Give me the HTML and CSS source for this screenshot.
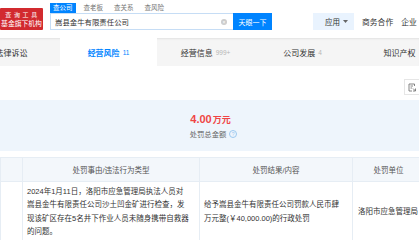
FILE: index.html
```html
<!DOCTYPE html>
<html lang="zh-CN">
<head>
    <meta charset="UTF-8">
    <meta name="viewport" content="width=device-width, initial-scale=1.0">
    <title>嵩县金牛有限责任公司 - 经营风险</title>
    <link rel="stylesheet" href="styles.css">
</head>
<body>
    <header class="topbar">
        <div class="logo">
            <span class="logo-top">查 询 工 具</span>
            <span class="logo-bottom">基金旗下机构</span>
        </div>

        <div class="search">
            <div class="search-tabs">
                <span class="stab active">查公司</span>
                <span class="stab">查老板</span>
                <span class="stab">查关系</span>
                <span class="stab">查风险</span>
            </div>
            <div class="search-row">
                <div class="search-input">
                    <span class="query">嵩县金牛有限责任公司</span>
                    <span class="clear">×</span>
                </div>
                <button class="search-btn">天眼一下</button>
            </div>
        </div>

        <nav class="toplinks">
            <span class="app">应用
                <svg width="5" height="3" viewBox="0 0 5 3"><path d="M0 0h5L2.5 3z" fill="#666"/></svg>
            </span>
            <span class="link">商务合作</span>
            <span class="link">企业</span>
        </nav>
    </header>

    <div class="tabs">
        <div class="tab">法律诉讼</div>
        <div class="tab active">经营风险<span class="count">11</span></div>
        <div class="tab">经营信息<span class="count">999+</span></div>
        <div class="tab">公司发展<span class="count">4</span></div>
        <div class="tab">知识产权</div>
    </div>

    <div class="toolbar">
        <span class="tool-btn">
            <svg width="9" height="9" viewBox="0 0 9 9" fill="none" stroke="#777" stroke-width="0.9">
                <path d="M6.5 3V1H1v7h3"/>
                <path d="M2.5 3h2.5M2.5 5h1.5"/>
                <path d="M5 5.5l2.5 2.5M7.5 5.5v2.5H5"/>
            </svg>
        </span>
    </div>

    <section class="summary">
        <div class="amount">4.00<span class="amount-unit">万元</span></div>
        <div class="amount-label">处罚总金额
            <span class="help">?</span>
        </div>
    </section>

    <table class="penalty">
        <colgroup>
            <col class="c-num">
            <col class="c-reason">
            <col class="c-result">
            <col class="c-dept">
        </colgroup>
        <thead>
            <tr>
                <th></th>
                <th>处罚事由/违法行为类型</th>
                <th>处罚结果/内容</th>
                <th>处罚单位</th>
            </tr>
        </thead>
        <tbody>
            <tr>
                <td></td>
                <td class="reason">2024年1月11日，洛阳市应急管理局执法人员对嵩县金牛有限责任公司沙土凹金矿进行检查，发现该矿区存在5名井下作业人员未随身携带自救器的问题。</td>
                <td class="result">给予嵩县金牛有限责任公司罚款人民币肆万元整(￥40,000.00)的行政处罚</td>
                <td class="dept">洛阳市应急管理局</td>
            </tr>
        </tbody>
    </table>
</body>
</html>
```

FILE: styles.css
```css
body {
    margin: 0;
    width: 419px;
    height: 240px;
    overflow: hidden;
    font-family: "Liberation Sans", "Noto Sans CJK SC", sans-serif;
    color: #333;
    background: #fff;
}

/* top bar */
.topbar {
    display: flex;
    align-items: flex-start;
    height: 38px;
    white-space: nowrap;
}

.logo {
    display: flex;
    flex-direction: column;
    align-items: center;
    width: 43px;
    height: 22px;
    margin-top: 8px;
    background: #d22a2f;
    color: #fff;
    border-radius: 1px;
}

.logo-top {
    font-size: 6px;
    line-height: 8px;
    margin-top: 3px;
    letter-spacing: 0.5px;
}

.logo-bottom {
    font-size: 6.8px;
    line-height: 9px;
}

.search {
    margin-left: 7px;
    margin-top: 3px;
}

.search-tabs {
    display: flex;
    height: 10px;
}

.stab {
    font-size: 6.5px;
    line-height: 10px;
    color: #777;
    margin-right: 11px;
}

.stab.active {
    background: #0084ff;
    color: #fff;
    padding: 0 3px;
    margin-right: 8px;
}

.search-row {
    display: flex;
    height: 17px;
}

.search-input {
    display: flex;
    align-items: center;
    justify-content: space-between;
    width: 174px;
    border: 1px solid #c6ddf5;
    border-right: none;
    padding: 0 4px;
}

.query {
    font-size: 7.4px;
}

.clear {
    width: 6px;
    height: 6px;
    border-radius: 50%;
    background: #ccc;
    color: #fff;
    font-size: 5px;
    line-height: 6px;
    text-align: center;
    margin-right: 2px;
}

.search-btn {
    width: 39px;
    border: none;
    padding: 0;
    background: #0084ff;
    color: #fff;
    font-family: inherit;
    font-size: 7px;
}

.toplinks {
    display: flex;
    align-items: center;
    margin-top: 13px;
    margin-left: 41px;
    height: 17px;
}

.app {
    display: flex;
    align-items: center;
    gap: 3px;
    height: 17px;
    padding: 0 6px 0 12px;
    background: #e9f3fe;
    font-size: 7.5px;
}

.link {
    font-size: 7.8px;
    margin-left: 8px;
}

/* main tabs */
.tabs {
    display: flex;
    height: 28px;
    margin-left: -37px;
    background: #f5f5f5;
    box-shadow: inset 0 2px 2px -1px rgba(0, 0, 0, 0.08);
    white-space: nowrap;
}

.tab {
    display: flex;
    align-items: center;
    justify-content: center;
    flex: 0 0 97px;
    font-size: 8px;
    color: #333;
}

.tab.active {
    background: #fff;
    color: #0084ff;
    font-weight: bold;
}

.count {
    font-size: 6.5px;
    font-weight: normal;
    color: #b5b5b5;
    margin-left: 3px;
}

.tab.active .count {
    color: #0084ff;
}

/* toolbar */
.toolbar {
    display: flex;
    justify-content: flex-end;
    height: 34px;
}

.tool-btn {
    display: flex;
    align-items: center;
    justify-content: center;
    width: 17px;
    height: 16px;
    margin-top: 13px;
    margin-right: -2px;
    border: 1px solid #e6e6e6;
    box-sizing: border-box;
}

/* summary */
.summary {
    height: 51px;
    background: #eef5fc;
    text-align: center;
    padding-top: 12px;
    box-sizing: border-box;
}

.amount {
    font-size: 11px;
    font-weight: bold;
    color: #f04545;
    line-height: 14px;
    padding-left: 2px;
}

.amount-unit {
    font-size: 9px;
    margin-left: 1px;
}

.amount-label {
    display: flex;
    align-items: center;
    justify-content: center;
    gap: 3px;
    margin-top: 2px;
    font-size: 7.3px;
    color: #666;
    padding-left: 8px;
}

.help {
    width: 6px;
    height: 6px;
    border: 0.8px solid #9cc8f0;
    border-radius: 50%;
    color: #9cc8f0;
    font-size: 5px;
    line-height: 6px;
}

/* table */
.penalty {
    margin-top: 6px;
    width: 424px;
    border-collapse: collapse;
    table-layout: fixed;
    font-size: 7.5px;
}

.c-num { width: 22px; }
.c-reason { width: 177px; }
.c-result { width: 153px; }
.c-dept { width: 72px; }

.penalty th,
.penalty td {
    border: 1px solid #e6edf4;
}

.penalty th {
    height: 21px;
    background: #f3f7fb;
    font-weight: normal;
    color: #555;
}

.penalty td {
    padding: 3px 4px;
    line-height: 13.3px;
    vertical-align: middle;
    color: #333;
}

.penalty td.reason {
    padding-right: 9px;
}

.penalty td.result {
    padding-right: 12px;
}

.penalty td.dept {
    padding-left: 5px;
    white-space: nowrap;
}
```
